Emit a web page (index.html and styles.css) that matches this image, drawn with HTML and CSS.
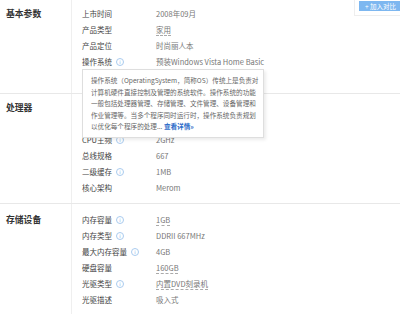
FILE: index.html
```html
<!DOCTYPE html>
<html>
<head>
<meta charset="utf-8">
<link rel="stylesheet" href="styles.css">
</head>
<body>
<div class="page">
  <div class="compare-wrap"><span class="compare-btn">+ 加入对比</span></div>

  <div class="section">
    <div class="sec-title">基本参数</div>
    <div class="rows">
      <div class="row"><span class="lbl">上市时间</span><span class="val">2008年09月</span></div>
      <div class="row"><span class="lbl">产品类型</span><span class="val"><span class="dot">家用</span></span></div>
      <div class="row"><span class="lbl">产品定位</span><span class="val">时尚丽人本</span></div>
      <div class="row"><span class="lbl">操作系统<span class="info">i</span></span><span class="val">预装Windows Vista Home Basic</span></div>
      <div class="row"></div>
      <div class="tip">
        <div>操作系统（OperatingSystem，简称OS）传统上是负责对</div>
        <div>计算机硬件直接控制及管理的系统软件。操作系统的功能</div>
        <div>一般包括处理器管理、存储管理、文件管理、设备管理和</div>
        <div>作业管理等。当多个程序同时运行时，操作系统负责规划</div>
        <div>以优化每个程序的处理... <span class="more">查看详情»</span></div>
      </div>
    </div>
  </div>

  <div class="section">
    <div class="sec-title">处理器</div>
    <div class="rows">
      <div class="row"></div>
      <div class="row"></div>
      <div class="row"><span class="lbl">CPU主频<span class="info">i</span></span><span class="val">2GHz</span></div>
      <div class="row"><span class="lbl">总线规格</span><span class="val">667</span></div>
      <div class="row"><span class="lbl">二级缓存<span class="info">i</span></span><span class="val">1MB</span></div>
      <div class="row"><span class="lbl">核心架构</span><span class="val">Merom</span></div>
    </div>
  </div>

  <div class="section last">
    <div class="sec-title">存储设备</div>
    <div class="rows">
      <div class="row"><span class="lbl">内存容量<span class="info">i</span></span><span class="val"><span class="dot">1GB</span></span></div>
      <div class="row"><span class="lbl">内存类型<span class="info">i</span></span><span class="val">DDRII 667MHz</span></div>
      <div class="row"><span class="lbl">最大内存容量<span class="info">i</span></span><span class="val">4GB</span></div>
      <div class="row"><span class="lbl">硬盘容量</span><span class="val"><span class="dot">160GB</span></span></div>
      <div class="row"><span class="lbl">光驱类型<span class="info">i</span></span><span class="val"><span class="dot">内置DVD刻录机</span></span></div>
      <div class="row"><span class="lbl">光驱描述</span><span class="val">吸入式</span></div>
    </div>
  </div>
</div>
</body>
</html>
```

FILE: styles.css
```css
html, body {
  margin: 0;
  padding: 0;
  background: #ffffff;
}
body {
  font-family: "Noto Sans CJK SC", "Noto Sans", sans-serif;
  font-size: 7.5px;
  color: #555;
  width: 400px;
  height: 314px;
  overflow: hidden;
}
.page {
  position: relative;
}
.section {
  display: flex;
  border-bottom: 1px solid #e8e8e8;
}
.sec-title {
  width: 65px;
  flex: none;
  padding: 6px 0 0 6px;
  border-right: 1px solid #efefef;
  font-weight: bold;
  font-size: 8.8px;
  line-height: 16px;
  color: #333;
}
.rows {
  position: relative;
  flex: 1;
  padding: 6px 0 7px 10px;
}
.last .sec-title,
.last .rows {
  padding-top: 8px;
}
.row {
  display: flex;
  height: 16px;
  line-height: 16px;
  align-items: center;
}
.lbl {
  width: 74px;
  flex: none;
  color: #444;
  display: flex;
  align-items: center;
}
.val {
  color: #777;
}
.dot {
  text-decoration: underline dashed #aaa;
  text-decoration-thickness: 1px;
  text-underline-offset: 2px;
}
.info {
  display: inline-flex;
  align-items: center;
  justify-content: center;
  width: 6px;
  height: 6px;
  margin-left: 4px;
  border: 1px solid #a9cbef;
  border-radius: 50%;
  color: #7eaee4;
  font-size: 5px;
  line-height: 6px;
  font-family: "DejaVu Sans", sans-serif;
}
.tip {
  position: absolute;
  left: 10px;
  top: 69px;
  width: 172px;
  height: 58px;
  padding: 5px 0 4px 8px;
  background: #fff;
  border: 1px solid #dedede;
  box-shadow: 2px 2px 3px rgba(0, 0, 0, 0.08);
  color: #666;
  font-size: 6.6px;
  line-height: 11.6px;
  white-space: nowrap;
  z-index: 5;
}
.more {
  color: #2d6cc9;
  font-weight: bold;
}
.compare-wrap {
  position: absolute;
  top: -4px;
  right: -1px;
  padding: 4px 0 4px 4px;
  border: 1px solid #eeeeee;
  background: #fff;
  z-index: 6;
}
.compare-btn {
  display: block;
  background: #7db7f0;
  color: #fff;
  font-size: 6.5px;
  line-height: 10px;
  padding: 0 4px 0 6px;
}
```
